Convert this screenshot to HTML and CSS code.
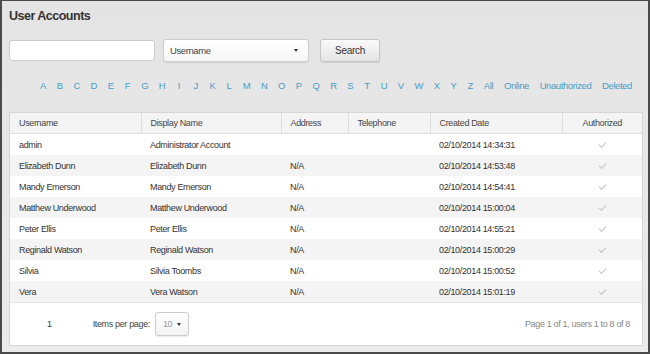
FILE: index.html
```html
<!DOCTYPE html>
<html lang="en">
<head>
    <meta charset="UTF-8">
    <title>User Accounts</title>
    <link rel="stylesheet" href="styles.css">
</head>
<body>
    <div class="frame">
        <h1>User Accounts</h1>

        <div class="search-bar">
            <input class="search-input" type="text">
            <div class="select">
                <span>Username</span>
                <span class="caret"></span>
            </div>
            <button class="btn">Search</button>
        </div>

        <div class="letters">
            <a>A</a><a>B</a><a>C</a><a>D</a><a>E</a><a>F</a><a>G</a><a>H</a><a>I</a>
            <a>J</a><a>K</a><a>L</a><a>M</a><a>N</a><a>O</a><a>P</a><a>Q</a><a>R</a>
            <a>S</a><a>T</a><a>U</a><a>V</a><a>W</a><a>X</a><a>Y</a><a>Z</a>
            <a>All</a><a>Online</a><a>Unauthorized</a><a>Deleted</a>
        </div>

        <div class="panel">
            <table>
                <colgroup>
                    <col style="width:131px"><col style="width:140px"><col style="width:67px">
                    <col style="width:82px"><col style="width:132px"><col>
                </colgroup>
                <tr>
                    <th>Username</th>
                    <th>Display Name</th>
                    <th>Address</th>
                    <th>Telephone</th>
                    <th>Created Date</th>
                    <th class="center">Authorized</th>
                </tr>
                <tr>
                    <td>admin</td><td>Administrator Account</td><td></td><td></td>
                    <td>02/10/2014 14:34:31</td><td class="center"><span class="check"></span></td>
                </tr>
                <tr>
                    <td>Elizabeth Dunn</td><td>Elizabeth Dunn</td><td>N/A</td><td></td>
                    <td>02/10/2014 14:53:48</td><td class="center"><span class="check"></span></td>
                </tr>
                <tr>
                    <td>Mandy Emerson</td><td>Mandy Emerson</td><td>N/A</td><td></td>
                    <td>02/10/2014 14:54:41</td><td class="center"><span class="check"></span></td>
                </tr>
                <tr>
                    <td>Matthew Underwood</td><td>Matthew Underwood</td><td>N/A</td><td></td>
                    <td>02/10/2014 15:00:04</td><td class="center"><span class="check"></span></td>
                </tr>
                <tr>
                    <td>Peter Ellis</td><td>Peter Ellis</td><td>N/A</td><td></td>
                    <td>02/10/2014 14:55:21</td><td class="center"><span class="check"></span></td>
                </tr>
                <tr>
                    <td>Reginald Watson</td><td>Reginald Watson</td><td>N/A</td><td></td>
                    <td>02/10/2014 15:00:29</td><td class="center"><span class="check"></span></td>
                </tr>
                <tr>
                    <td>Silvia</td><td>Silvia Toombs</td><td>N/A</td><td></td>
                    <td>02/10/2014 15:00:52</td><td class="center"><span class="check"></span></td>
                </tr>
                <tr>
                    <td>Vera</td><td>Vera Watson</td><td>N/A</td><td></td>
                    <td>02/10/2014 15:01:19</td><td class="center"><span class="check"></span></td>
                </tr>
            </table>

            <div class="pager">
                <span class="page-num">1</span>
                <span class="per-page">Items per page:</span>
                <div class="small-select">10 <span class="caret"></span></div>
                <span class="summary">Page 1 of 1, users 1 to 8 of 8</span>
            </div>
        </div>
    </div>
</body>
</html>
```

FILE: styles.css
```css
body {
    margin: 0;
    font-family: "Liberation Sans", Arial, sans-serif;
    color: #333;
}
.frame {
    width: 650px;
    height: 354px;
    box-sizing: border-box;
    border: 2px solid #4a4a4a;
    border-top-width: 1px;
    background: linear-gradient(to bottom, #e4e4e4, #ebebeb);
    padding: 0 7px;
}
h1 {
    font-size: 12.5px;
    letter-spacing: -0.5px;
    font-weight: bold;
    color: #333;
    margin: 0;
    padding-top: 8px;
    height: 28px;
    box-sizing: border-box;
}
.search-bar {
    display: flex;
    align-items: center;
    height: 24px;
    margin-top: 9px;
}
.search-input {
    width: 146px;
    height: 21px;
    box-sizing: border-box;
    border: 1px solid #ccc;
    border-radius: 3px;
    background: #fff;
    margin: 0;
}
.select {
    width: 146px;
    height: 23px;
    box-sizing: border-box;
    margin-left: 8px;
    border: 1px solid #ccc;
    border-radius: 3px;
    background: linear-gradient(to bottom, #fff, #f6f6f6);
    box-shadow: 0 1px 1px rgba(0,0,0,0.08);
    display: flex;
    align-items: center;
    justify-content: space-between;
    padding: 0 10px 0 6px;
    font-size: 9.5px;
    letter-spacing: -0.4px;
    color: #444;
}
.caret {
    display: inline-block;
    width: 0;
    height: 0;
    border-left: 2.5px solid transparent;
    border-right: 2.5px solid transparent;
    border-top: 3px solid #333;
}
.btn {
    margin-left: 11px;
    width: 60px;
    height: 23px;
    border: 1px solid #c4c4c4;
    border-radius: 3px;
    background: linear-gradient(to bottom, #fafafa, #e4e4e4);
    box-shadow: 0 1px 1px rgba(0,0,0,0.1);
    font-family: "Liberation Sans", Arial, sans-serif;
    font-size: 10px;
    letter-spacing: -0.3px;
    color: #333;
    padding: 0;
}
.letters {
    display: flex;
    justify-content: flex-end;
    align-items: center;
    gap: 10.7px;
    padding: 0 9px 4px 0;
    height: 50px;
    box-sizing: border-box;
    font-size: 9.5px;
    letter-spacing: -0.4px;
}
.letters a {
    color: #4a9cc4;
    min-width: 6px;
    text-align: center;
}
.panel {
    background: #fff;
    border: 1px solid #d6d6d6;
    width: 634px;
    box-sizing: border-box;
}
table {
    width: 100%;
    border-collapse: collapse;
    table-layout: fixed;
    font-size: 9px;
    letter-spacing: -0.35px;
}
th {
    background: #f4f4f4;
    font-weight: normal;
    color: #444;
    text-align: left;
    height: 20px;
    padding: 0 9px;
    border-right: 1px solid #ddd;
    border-bottom: 1px solid #ddd;
}
th:last-child {
    border-right: none;
}
td {
    height: 21px;
    padding: 0 9px;
    color: #333;
    white-space: nowrap;
}
tr:nth-child(odd) td {
    background: #f4f4f4;
}
tr:nth-child(even) td {
    background: #fff;
}
tr:last-child td {
    border-bottom: 1px solid #e2e2e2;
}
.center {
    text-align: center;
}
.check {
    display: inline-block;
    width: 6px;
    height: 3px;
    border-left: 1.5px solid #c4c4c4;
    border-bottom: 1.5px solid #c4c4c4;
    transform: rotate(-45deg);
    margin-bottom: 2px;
}
.pager {
    display: flex;
    align-items: center;
    height: 42px;
    font-size: 9px;
    letter-spacing: -0.35px;
}
.page-num {
    margin-left: 37px;
    color: #333;
}
.per-page {
    margin-left: 41px;
    color: #444;
}
.small-select {
    margin-left: 5px;
    width: 34px;
    height: 24px;
    box-sizing: border-box;
    border: 1px solid #ccc;
    border-radius: 3px;
    background: linear-gradient(to bottom, #fff, #f3f3f3);
    box-shadow: 0 1px 1px rgba(0,0,0,0.08);
    display: flex;
    align-items: center;
    gap: 5px;
    padding-left: 7px;
    color: #999;
}
.summary {
    margin-left: auto;
    margin-right: 12px;
    color: #888;
}
```
